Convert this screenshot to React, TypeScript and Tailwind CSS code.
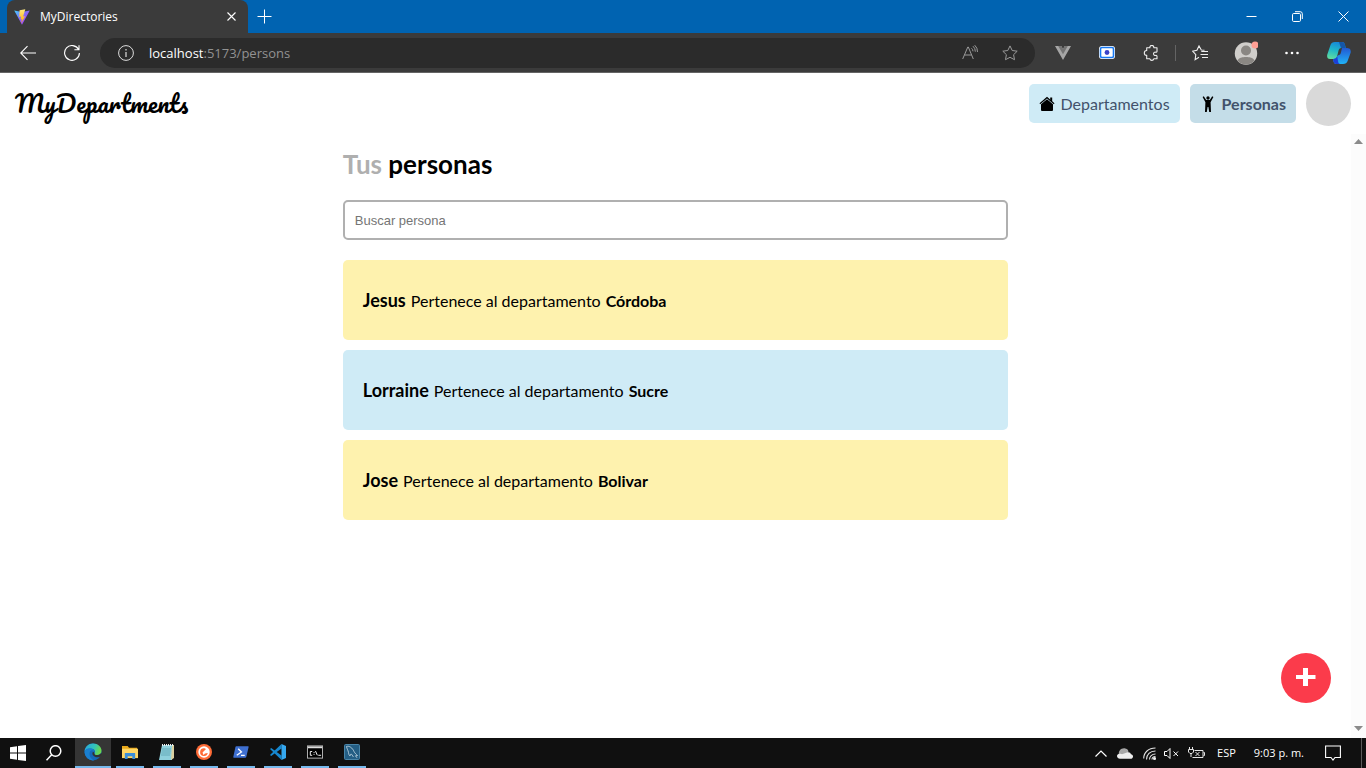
import { useState } from "react";
import type { ReactNode } from "react";

type Person = { name: string; department: string; color: string };

const people: Person[] = [
  { name: "Jesus", department: "Córdoba", color: "bg-[#fef2ae]" },
  { name: "Lorraine", department: "Sucre", color: "bg-[#cfebf6]" },
  { name: "Jose", department: "Bolivar", color: "bg-[#fef2ae]" },
];

function ViteIcon() {
  return (
    <svg className="h-4 w-4" viewBox="0 0 16 16" aria-hidden="true">
      <defs>
        <linearGradient id="vite-shield" x1="0" y1="0" x2="1" y2="1">
          <stop offset="0" stopColor="#41d1ff" />
          <stop offset="0.5" stopColor="#8a63f5" />
          <stop offset="1" stopColor="#bd34fe" />
        </linearGradient>
        <linearGradient id="vite-bolt" x1="0" y1="0" x2="0" y2="1">
          <stop offset="0" stopColor="#ffea83" />
          <stop offset="1" stopColor="#ffa800" />
        </linearGradient>
      </defs>
      <path d="M0.2 1.6 8 3l7.8-1.4L8 15.8Z" fill="url(#vite-shield)" />
      <path d="M11.3 0.2 5.6 1.3 5.2 8l1.9-.4-.6 3 1.5-.4-.8 4 3.9-7-2 .4Z" fill="url(#vite-bolt)" />
    </svg>
  );
}

function TabStrip() {
  return (
    <div className="flex h-[33px] shrink-0 items-stretch bg-[#0063b1] text-white">
      <div className="ml-[7px] flex w-[241px] items-center rounded-t-lg bg-[#3b3b3b] pr-[9px] pl-[7px]">
        <ViteIcon />
        <span className="ml-[10px] flex-1 text-[12px] leading-4">MyDirectories</span>
        <button type="button" aria-label="Cerrar pestaña" className="flex h-4 w-4 items-center justify-center">
          <svg className="h-[9px] w-[9px]" viewBox="0 0 9 9" stroke="#fff" strokeWidth="1.1">
            <path d="M0.5 0.5l8 8M8.5 0.5l-8 8" />
          </svg>
        </button>
      </div>
      <button type="button" aria-label="Nueva pestaña" className="flex w-8 items-center justify-center">
        <svg className="h-[15px] w-[15px]" viewBox="0 0 15 15" stroke="#fff">
          <path d="M7.5 0.5v14M0.5 7.5h14" />
        </svg>
      </button>
      <div className="ml-auto flex">
        <button type="button" aria-label="Minimizar" className="flex w-[46px] items-center justify-center">
          <svg className="h-[11px] w-[11px]" viewBox="0 0 11 11" stroke="#fff">
            <path d="M0.5 5.5h10" />
          </svg>
        </button>
        <button type="button" aria-label="Restaurar" className="flex w-[46px] items-center justify-center">
          <svg className="h-[11px] w-[11px]" viewBox="0 0 11 11" fill="none" stroke="#fff">
            <rect x="0.5" y="2.5" width="8" height="8" rx="1.2" />
            <path d="M3 .7h5.2a2.1 2.1 0 0 1 2.1 2.1v5.2" />
          </svg>
        </button>
        <button type="button" aria-label="Cerrar" className="flex w-[46px] items-center justify-center">
          <svg className="h-[11px] w-[11px]" viewBox="0 0 11 11" stroke="#fff">
            <path d="M0.5 0.5l10 10M10.5 0.5l-10 10" />
          </svg>
        </button>
      </div>
    </div>
  );
}

function ToolButton({ label, children }: { label: string; children: ReactNode }) {
  return (
    <button type="button" aria-label={label} className="flex h-[30px] w-11 shrink-0 items-center justify-center">
      {children}
    </button>
  );
}

const starPath = "M8 .9l2.2 4.6 5 .7-3.6 3.5.9 5L8 12.3 3.5 14.7l.9-5L.8 6.2l5-.7Z";

function Toolbar() {
  return (
    <div className="flex h-10 shrink-0 items-center border-b border-[#656565] bg-[#3b3b3b] pr-[5px] pl-[6px]">
      <ToolButton label="Atrás">
        <svg className="h-4 w-4" viewBox="0 0 16 16" fill="none" stroke="#fff" strokeWidth="1.1">
          <path d="M16 8H.8M7.5 1.2.7 8l6.8 6.8" />
        </svg>
      </ToolButton>
      <ToolButton label="Actualizar">
        <svg className="h-4 w-4" viewBox="0 0 16 16" fill="none" stroke="#fff" strokeWidth="1.1">
          <path d="M14.6 4.6A7.4 7.4 0 1 0 15.4 8M15 .2v4.6h-4.6" />
        </svg>
      </ToolButton>
      <div className="ml-[6px] flex h-[30px] flex-1 items-center rounded-full bg-[#2b2b2b] pr-[5px] pl-[18px]">
        <svg className="h-4 w-4 shrink-0" viewBox="0 0 16 16" fill="none" stroke="#ddd" aria-hidden="true">
          <circle cx="8" cy="8" r="7.4" />
          <path d="M8 7v5M8 4v1.4" strokeWidth="1.2" />
        </svg>
        <a href="/persons" className="ml-[15px] flex-1 text-[13px] leading-5 text-[#929292]">
          <span className="text-white">localhost</span>:5173/persons
        </a>
        <button type="button" aria-label="Leer en voz alta" className="flex h-[30px] w-10 items-center justify-center">
          <svg className="h-4 w-4" viewBox="0 0 16 16" fill="none" stroke="#9a9a9a">
            <path d="M.7 14 5.8 2h.5l5 12M2.5 10h7M9.5 3.3a4 4 0 0 1 1.5 3M11 1.2a7 7 0 0 1 2.3 5.5M12.7.2A8.5 8.5 0 0 1 15.5 7" />
          </svg>
        </button>
        <button type="button" aria-label="Agregar a favoritos" className="flex h-[30px] w-10 items-center justify-center">
          <svg className="h-4 w-4" viewBox="0 0 16 16" fill="none" stroke="#9a9a9a" strokeLinejoin="round">
            <path d={starPath} />
          </svg>
        </button>
      </div>
      <div className="ml-[6px] flex items-center">
        <ToolButton label="Vue Devtools">
          <svg className="h-[14px] w-4" viewBox="0 0 16 14">
            <path d="M0 0h6.3L8 3 9.7 0H16L8 14Z" fill="#a6a6a6" />
            <path d="M3.2 0h3.1L8 3l1.7-3h3.1L8 8.3Z" fill="#747474" />
          </svg>
        </ToolButton>
        <ToolButton label="Grabador de pantalla">
          <svg className="h-[13px] w-4" viewBox="0 0 16 13">
            <rect width="16" height="13" rx="3" fill="#fff" />
            <rect x="1.5" y="1.5" width="13" height="10" rx="1.5" fill="#fff" stroke="#1778f2" strokeWidth="1.6" />
            <circle cx="8" cy="6.5" r="2.4" fill="#3a42c8" />
          </svg>
        </ToolButton>
        <ToolButton label="Extensiones">
          <svg className="h-4 w-4" viewBox="0 0 16 16" fill="none" stroke="#eee" strokeWidth="1.1" strokeLinejoin="round">
            <path d="M3.7 5.5V2.8h3.2a2 2 0 1 1 3.9 0H14v3.4a1 1 0 0 1-1.2 1 1.7 1.7 0 1 0 0 3.2 1 1 0 0 1 1.2 1v2.4h-3.2a2 2 0 0 1-3.9 0H3.7v-3.5a2.3 2.3 0 1 1 0-4.8Z" />
          </svg>
        </ToolButton>
      </div>
      <div className="mx-[2px] h-4 w-px bg-[#646464]" />
      <ToolButton label="Favoritos">
        <svg className="h-4 w-4" viewBox="0 0 16 16" fill="none" stroke="#eee" strokeWidth="1.1">
          <path d="M12.5 5.2 9.3 5 7 .9 4.9 5.2.6 6.1l3.2 3.5-.7 5L7 12.3M9.3 6.5H16M8.5 9.5H16M10 12.5h6" />
        </svg>
      </ToolButton>
      <div className="flex gap-[2px] pl-[2px]">
        <ToolButton label="Perfil">
          <svg className="h-6 w-6" viewBox="0 0 24 24">
            <circle cx="12" cy="12.5" r="11.2" fill="#d0cecb" />
            <circle cx="12" cy="9.5" r="5" fill="#8a8783" />
            <path d="M3.5 19.5C5 16.5 8.5 16 12 16s7 .5 8.500 3.500a11.200 11.200 0 0 1-17 0" fill="#8a8783" />
            <circle cx="21" cy="4" r="3.5" fill="#ff9e94" />
          </svg>
        </ToolButton>
        <ToolButton label="Configuración y más">
          <svg className="h-4 w-4" viewBox="0 0 16 16" fill="#fff">
            <circle cx="2.5" cy="8" r="1.3" />
            <circle cx="8" cy="8" r="1.3" />
            <circle cx="13.5" cy="8" r="1.3" />
          </svg>
        </ToolButton>
      </div>
      <div className="pl-[3px]">
        <ToolButton label="Copilot">
          <svg className="h-6 w-6" viewBox="0 0 24 24">
            <defs>
              <linearGradient id="copilot-left" x1="0.6" y1="0" x2="0.3" y2="1">
                <stop offset="0" stopColor="#1686d9" />
                <stop offset="0.5" stopColor="#20b7c9" />
                <stop offset="1" stopColor="#5fdca0" />
              </linearGradient>
              <linearGradient id="copilot-right" x1="0" y1="0" x2="0" y2="1">
                <stop offset="0" stopColor="#2358d2" />
                <stop offset="1" stopColor="#20b3f7" />
              </linearGradient>
            </defs>
            <path d="M8 1h7c2 0 2.500 1 3 3l.8 3h-4.300c-2 0-2.600 1-3.100 3l-1.200 5c-.5 2-1.300 3-3.200 3H3c-2.500 0-3.300-2-2.700-4.500L3.500 4C4.200 2 5.500 1 8 1" fill="url(#copilot-left)" />
            <path d="M14.500 1c2.500 0 3 1 3.500 3l.8 3H14L12 1Z" fill="#1556a8" />
            <path d="M16 23H9.500c-2 0-2.600-1-3.100-3L6 18c2.500 0 3.700-1 4.200-3l1.600-1c1 0 1.700-.8 2-2l1.200-5h3.200c3 0 6 0 5.500 4.500L20.600 20c-.7 2-2.100 3-4.600 3" fill="url(#copilot-right)" />
            <path d="M6 18c2.500 0 3.700-1 4.200-3l.8 5c.3 1.500.5 2.500 2 3H9.500c-2 0-2.600-1-3.100-3Z" fill="#1c3fd6" />
          </svg>
        </ToolButton>
      </div>
    </div>
  );
}

function HouseIcon() {
  return (
    <svg className="h-4 w-4" viewBox="0 0 16 16" aria-hidden="true">
      <path d="M8 3.2 14 8.2V14q0 1-1 1H3q-1 0-1-1V8.2Z" />
      <path d="M.5 7.3 8 .8l7.5 6.5-.7.9L8 2.500 1.200 8.200Z" />
      <path d="M11.2 1.500h2v4.500l-2-1.700Z" />
    </svg>
  );
}

function PersonIcon() {
  return (
    <svg className="h-4 w-4" viewBox="0 0 16 16" aria-hidden="true">
      <circle cx="8" cy="2" r="1.700" />
      <path d="M2.600.9 3.800.3l2.400 3.800h3.600L12.200.3l1.200.6-2.800 5.400.4 9.700H9.200L8.400 11h-.8l-.8 5H5l.4-9.700Z" />
    </svg>
  );
}

function AppHeader() {
  return (
    <header className="flex shrink-0 items-center justify-between px-[15px] py-2">
      <a href="/" className="pb-[2px] font-['Pacifico','Lato',cursive] text-[24px] leading-10 text-black">
        MyDepartments
      </a>
      <nav className="flex items-center gap-[10px]">
        <a href="/departments" className="flex h-[39px] items-center gap-[6px] rounded-[5px] bg-[#cfebf6] px-[10px] text-[#42526b]">
          <HouseIcon />
          Departamentos
        </a>
        <a href="/persons" className="flex h-[39px] items-center gap-[6px] rounded-[5px] bg-[#c4dde8] px-[10px] font-bold text-[#42526b]">
          <PersonIcon />
          Personas
        </a>
        <button type="button" aria-label="Cuenta" className="h-[45px] w-[45px] rounded-full bg-[#d9d9d9]" />
      </nav>
    </header>
  );
}

function ScrollRail() {
  return (
    <div className="flex w-[15px] shrink-0 flex-col items-center justify-between bg-[#fcfcfc] pt-[5px] pb-[7px]" aria-hidden="true">
      <svg className="h-[5px] w-[9px]" viewBox="0 0 9 5" fill="#8b8b8b">
        <path d="M4.500 0 9 5H0Z" />
      </svg>
      <svg className="h-[5px] w-[9px]" viewBox="0 0 9 5" fill="#8b8b8b">
        <path d="M0 0h9L4.500 5Z" />
      </svg>
    </div>
  );
}

function PersonsPage() {
  const [query, setQuery] = useState("");
  const shown = people.filter((p) => p.name.toLowerCase().includes(query.toLowerCase()));
  return (
    <div className="flex min-h-0 flex-1 flex-col bg-white font-['Lato',sans-serif] text-[16px] leading-6 text-black">
      <AppHeader />
      <div className="relative flex min-h-0 flex-1">
        <main className="flex-1 overflow-hidden p-[10px]">
          <div className="mx-auto w-1/2">
            <h1 className="text-[26px] leading-[41px] font-bold">
              <span className="text-[#afafaf]">Tus</span> personas
            </h1>
            <input
              type="text"
              aria-label="Buscar persona"
              placeholder="Buscar persona"
              value={query}
              onChange={(e) => setQuery(e.target.value)}
              className="mt-[15px] block h-10 w-full rounded-[5px] border-2 border-[#b0b0b0] px-[10px] font-['Liberation_Sans',sans-serif] text-[13px] placeholder:text-[#757575]"
            />
            <ul className="mt-5 flex flex-col gap-[10px]">
              {shown.map((p) => (
                <li key={p.name} className={`flex h-20 items-baseline gap-[5px] rounded-[5px] px-5 pt-7 ${p.color}`}>
                  <span className="text-[18px] font-bold">{p.name}</span>
                  <span>Pertenece al departamento</span>
                  <span className="font-bold">{p.department}</span>
                </li>
              ))}
            </ul>
          </div>
        </main>
        <ScrollRail />
        <button
          type="button"
          aria-label="Agregar persona"
          className="absolute right-[35px] bottom-[35px] flex h-[50px] w-[50px] items-center justify-center rounded-full bg-[#fb3b4b] pb-[2px]"
        >
          <svg className="h-[18px] w-5" viewBox="0 0 20 18" fill="#fff">
            <path d="M7 0h5v7h7.500v4H12v7H7v-7H0V7h7Z" />
          </svg>
        </button>
      </div>
    </div>
  );
}

function EdgeIcon() {
  return (
    <svg className="h-[18px] w-[18px]" viewBox="0 0 18 18">
      <defs>
        <linearGradient id="edge-top" x1="0" y1="0" x2="1" y2="0.3">
          <stop offset="0" stopColor="#2aa5dc" />
          <stop offset="0.6" stopColor="#31c4bd" />
          <stop offset="1" stopColor="#6ad84f" />
        </linearGradient>
      </defs>
      <circle cx="9" cy="9" r="8.5" fill="#1567b8" />
      <path d="M.5 8.500C1 3.500 4.500.5 9 .5c5 0 8.500 3.500 8.500 7.200 0 3-2 4.300-4.500 4.300-2 0-3-.7-2.500-1.500 1.500-2 0-5-3.500-5S1.500 6.500.5 8.500" fill="url(#edge-top)" />
      <path d="M10.500 10.500c-.5.8.5 1.500 2.500 1.500 1.700 0 3.200-.6 4-2 1 0 1 3-1.500 4-1.500.5-3.500.5-5-.5S8 11.500 8.500 9.500c.5-1 1.500-.5 2 1" fill="#323232" />
      <path d="M6 8.500C4.500 12 6.500 16 10 17.400A8.500 8.500 0 0 1 .5 9c.8-3.300 4-4 6.500-3.500 2 .3 3 1.500 3 2.500-1-1-3-1-4 .5" fill="#1a7fd0" />
    </svg>
  );
}

const taskbarApps: { label: string; icon: ReactNode }[] = [
  {
    label: "Explorador de archivos",
    icon: (
      <svg className="h-4 w-4" viewBox="0 0 17 17">
        <path d="M0 2h6l1.500 2H16v11H0Z" fill="#e9a91b" />
        <path d="M0 5h17v10H0Z" fill="#ffd766" />
        <path d="M3 16V9.500h11V16h-3v-3H6v3Z" fill="#3b8fd9" />
      </svg>
    ),
  },
  {
    label: "Bloc de notas",
    icon: (
      <svg className="h-[18px] w-[18px]" viewBox="0 0 18 18">
        <path d="M4 2h12l-2 15H1Z" fill="#8ed0dc" />
        <path d="M14 2h2v13l-3 2Z" fill="#d9cf9f" />
        <path d="M4 2h12" stroke="#eee" strokeWidth="2" strokeDasharray="1 1" />
        <path d="M4 6h9M3.700 8h9M3.400 10h9M3 12h9" stroke="#549cab" strokeWidth=".7" />
      </svg>
    ),
  },
  {
    label: "Postman",
    icon: (
      <svg className="h-4 w-4" viewBox="0 0 16 16">
        <circle cx="8" cy="8" r="8" fill="#ff6c37" />
        <circle cx="8" cy="8" r="5.700" fill="#fff" />
        <path d="M8.500 4.200A3.900 3.900 0 1 0 11.800 9L9 9.500 7.500 11l-1-2.500L10 5Z" fill="#ff6c37" />
      </svg>
    ),
  },
  {
    label: "PowerShell",
    icon: (
      <svg className="h-[14px] w-4" viewBox="0 0 17 14">
        <path d="M3.500 1H16q.8 0 .6.8l-2.500 10.500q-.2.7-1 .7H.9q-.8 0-.6-.8L2.600 1.700q.2-.7.900-.7" fill="#3e6fd0" />
        <path d="m5.500 3.500 3.500 3.500-5 3.500M8.500 10.500h4" fill="none" stroke="#fff" strokeWidth="1.400" />
      </svg>
    ),
  },
  {
    label: "Visual Studio Code",
    icon: (
      <svg className="h-4 w-4" viewBox="0 0 16 16">
        <path d="m11.500 0-10 9.500L0 11l1.200 1L11.500 4.500v7L1.200 4 0 5l11.500 11Z" fill="#1687cf" />
        <path d="m11.500 0 4.500 2v12l-4.500 2Z" fill="#35a8f0" />
      </svg>
    ),
  },
  {
    label: "Símbolo del sistema",
    icon: (
      <svg className="h-[14px] w-4" viewBox="0 0 17 14">
        <rect x=".5" y=".5" width="16" height="13" fill="#000" stroke="#b9b9b9" />
        <path d="M1 2h15" stroke="#ddd" strokeWidth="2" />
        <path d="M5.500 6.500h-2v4h2M7 7.500h1M7 9.500h1M9 6l2 4.500M12 10.500h3" fill="none" stroke="#fff" />
      </svg>
    ),
  },
  {
    label: "MySQL Workbench",
    icon: (
      <svg className="h-4 w-4" viewBox="0 0 16 16">
        <rect x=".5" y=".5" width="15" height="15" rx="1" fill="#245e84" stroke="#4985a8" />
        <path d="M2.500 2.500c3-1 6 1.500 7.500 5 1 2 2.500 3 3.500 4l-2 .3 1.500 2M2.500 2.500C3 5 4 6 4.500 8.500c.2 2 .8 3 1.500 3.500.5-1 .5-2 1-2 1 0 1.500 2 2.500 3" fill="none" stroke="#c9dce6" strokeWidth=".8" />
      </svg>
    ),
  },
];

function Taskbar() {
  return (
    <footer className="flex h-[30px] shrink-0 items-stretch bg-[#101010] text-white">
      <button type="button" aria-label="Inicio" className="flex w-9 items-center justify-center">
        <svg className="h-4 w-4" viewBox="0 0 16 16" fill="#fff">
          <path d="M0 2.200 7 1.200v6.300H0ZM8 1.100 16 0v7.500H8ZM0 8.500h7v6.300l-7-1ZM8 8.500h8V16l-8-1.100Z" />
        </svg>
      </button>
      <button type="button" aria-label="Buscar" className="flex w-9 items-center justify-center">
        <svg className="h-4 w-4" viewBox="0 0 16 16" fill="none" stroke="#fff" strokeWidth="1.500">
          <circle cx="9.500" cy="6" r="5.300" />
          <path d="M5.700 9.800.5 15.300" />
        </svg>
      </button>
      <button type="button" aria-label="Microsoft Edge" className="ml-[3px] flex w-9 items-center justify-center border-b-2 border-[#76b9ed] bg-[#353535]">
        <EdgeIcon />
      </button>
      <div className="ml-[5px] flex gap-[9px]">
        {taskbarApps.map((app) => (
          <button key={app.label} type="button" aria-label={app.label} className="flex w-7 items-center justify-center border-b-2 border-[#76b9ed]">
            {app.icon}
          </button>
        ))}
      </div>
      <div className="ml-auto flex items-center">
        <svg className="h-[7px] w-3" viewBox="0 0 12 7" fill="none" stroke="#fff" strokeWidth="1.200" aria-hidden="true">
          <path d="m.5 6.500 5.500-5.500 5.500 5.500" />
        </svg>
        <svg className="ml-[10px] h-[11px] w-4" viewBox="0 0 16 11" aria-hidden="true">
          <path d="M2 7C1 3 4 0 7.500.3 10 .5 11 2 11.500 3.500L9 8Z" fill="#a8a8a8" />
          <path d="M3 10.800C-1 10.500-1 5.500 3 5.700c1 0 1.500.3 2 .5L10 4.500c2-1 3.500.2 4 1.700 3 .5 2.500 4.600-.5 4.600Z" fill="#eee" />
        </svg>
        <svg className="ml-[10px] h-[13px] w-[13px]" viewBox="0 0 13 13" fill="none" stroke="#e5e5e5" strokeWidth="1.100" aria-hidden="true">
          <path d="M.7 11.500C.7 5.500 5.500 1 12.500 1M3.500 12.500c0-5 3.500-8.500 9-8.500M6.500 12.500c0-3 2.500-5.500 6-5.500M9 12.500c0-1.700 1.500-3 3.500-3" />
          <circle cx="11.500" cy="11.500" r="1" fill="#fff" />
        </svg>
        <svg className="ml-2 h-[13px] w-[15px]" viewBox="0 0 15 13" fill="none" stroke="#fff" aria-hidden="true">
          <path d="M.5 4.500H3L6 1.500v10L3 8.500H.5ZM9.500 4.500l4.500 4.500M14 4.500 9.500 9" />
        </svg>
        <svg className="ml-[9px] h-[13px] w-[17px]" viewBox="0 0 17 13" fill="none" stroke="#e5e5e5" aria-hidden="true">
          <path d="M1.500 0v2M4.500 0v2M.5 2.500h5V5l-1.500 1.500H2L.5 5ZM3 6.500V10M6.500 3.500H15v7H4.500M15.500 5.500h1v3h-1M7.500 5l4 4M11.500 5l-4 4" />
        </svg>
        <button type="button" className="ml-[12px] text-[11px] leading-4">
          ESP
        </button>
        <time className="ml-[18px] text-[11px] leading-4">9:03 p. m.</time>
        <button type="button" aria-label="Notificaciones" className="mr-5 ml-[21px] flex h-4 w-4 items-center">
          <svg className="h-4 w-4" viewBox="0 0 16 16" fill="none" stroke="#fff" strokeWidth="1.100">
            <path d="M.6 1h14.800v11.500H10L8 15l-2-2.500H.6Z" />
          </svg>
        </button>
        <div className="h-[30px] w-px bg-[#5a5a5a]" />
        <div className="w-1" />
      </div>
    </footer>
  );
}

export default function App() {
  return (
    <div className="flex h-screen flex-col overflow-hidden font-['Segoe_UI','Open_Sans',sans-serif]">
      <TabStrip />
      <Toolbar />
      <PersonsPage />
      <Taskbar />
    </div>
  );
}
